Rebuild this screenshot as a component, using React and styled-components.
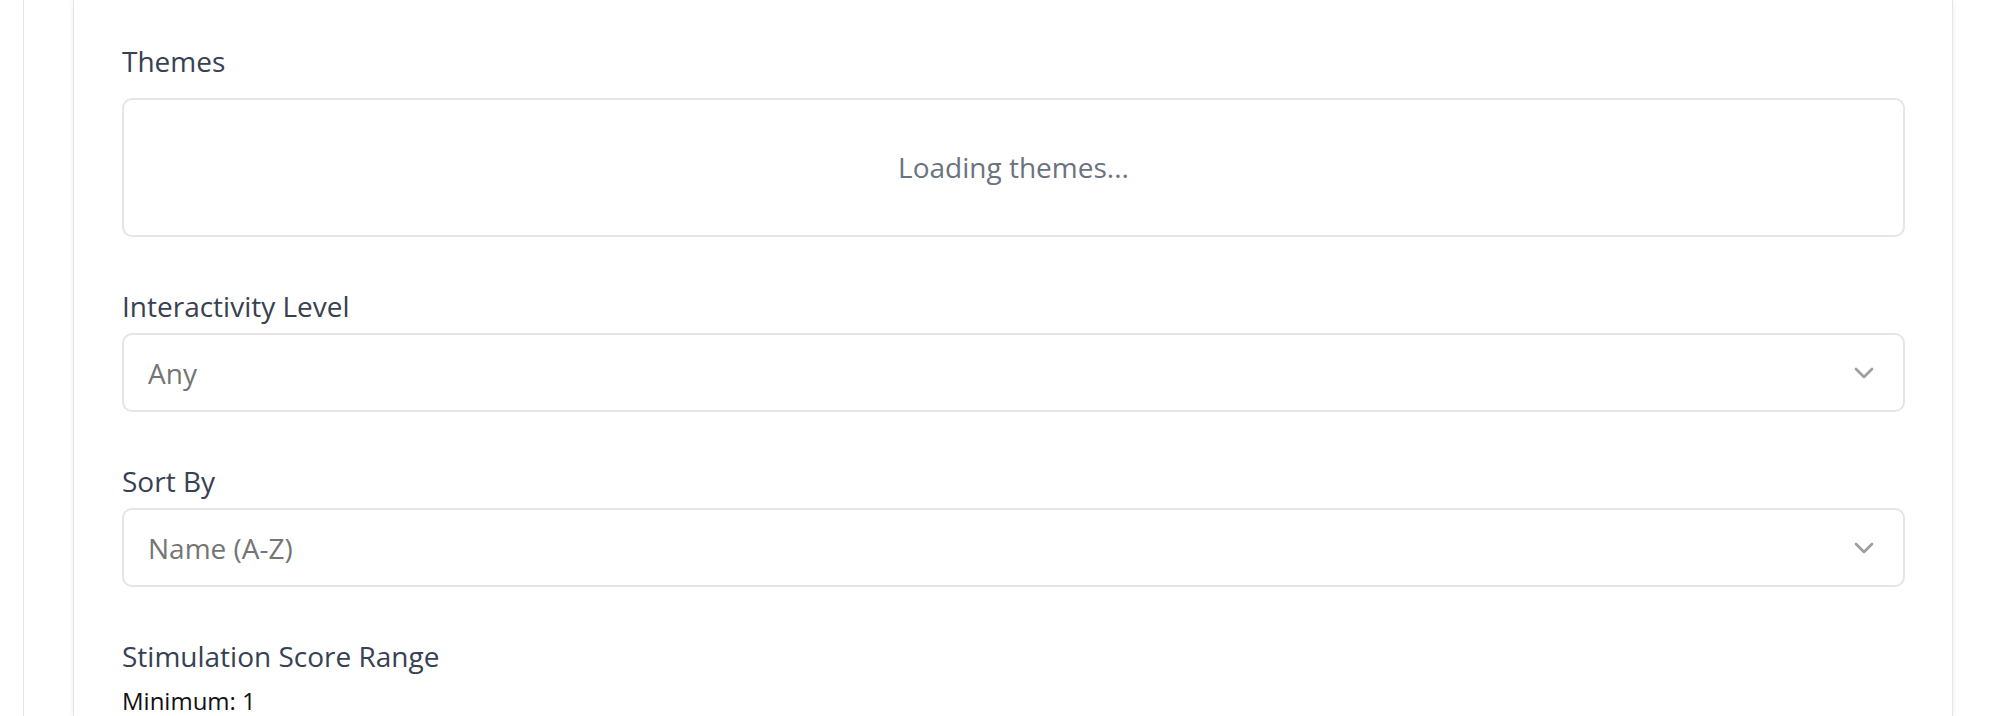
import React from "react";
import styled, { createGlobalStyle } from "styled-components";

const Global = createGlobalStyle`
  html, body {
    margin: 0;
    padding: 0;
    background: #ffffff;
    overflow: hidden;
  }
  body {
    font-family: "Open Sans", "Noto Sans", Arial, sans-serif;
    -webkit-font-smoothing: antialiased;
  }
`;

const Page = styled.div`
  height: 716px;
  padding-left: 23px;
  box-sizing: border-box;
  overflow: hidden;
`;

const Frame = styled.div`
  height: 100%;
  border-left: 1px solid #e4e4e4;
  padding-left: 49px;
  box-sizing: border-box;
`;

const Card = styled.div`
  width: 1880px;
  height: 100%;
  box-sizing: border-box;
  background: #ffffff;
  border-left: 1px solid #e6e6e6;
  border-right: 1px solid #e6e6e6;
  box-shadow: 0 1px 5px rgba(0, 0, 0, 0.08);
  padding: 42px 47px 0 48px;
`;

const Group = styled.div`
  display: flex;
  flex-direction: column;
  margin-bottom: 50px;
`;

const Label = styled.div`
  font-size: 28px;
  line-height: 38px;
  color: #374151;
  margin-bottom: ${(p) => p.$gap ?? 8}px;
`;

const EmptyBox = styled.div`
  height: 139px;
  box-sizing: border-box;
  border: 2px solid #e5e5e5;
  border-radius: 10px;
  display: flex;
  align-items: center;
  justify-content: center;
  padding-bottom: 2px;
  font-size: 28px;
  color: #6b7280;
`;

const SelectBox = styled.div`
  height: 79px;
  box-sizing: border-box;
  border: 2px solid #e5e5e5;
  border-radius: 10px;
  display: flex;
  align-items: center;
  justify-content: space-between;
  padding: 0 29px 0 24px;
  font-size: 28px;
  color: #757575;
  background: #ffffff;
`;

const Chevron = styled.svg`
  width: 20px;
  height: 12px;
  flex: none;
`;

const Sub = styled.div`
  margin-top: 9px;
  font-size: 24px;
  line-height: 33px;
  color: #111111;
`;

const Select = ({ value }) => (
  <SelectBox>
    <span>{value}</span>
    <Chevron viewBox="0 0 20 12">
      <polyline
        points="2,2 10,10 18,2"
        fill="none"
        stroke="#9e9e9e"
        strokeWidth="2.6"
        strokeLinecap="round"
        strokeLinejoin="round"
      />
    </Chevron>
  </SelectBox>
);

export default function App() {
  return (
    <>
      <Global />
      <Page>
        <Frame>
          <Card>
            <Group>
              <Label $gap={18}>Themes</Label>
              <EmptyBox>Loading themes...</EmptyBox>
            </Group>
            <Group>
              <Label>Interactivity Level</Label>
              <Select value="Any" />
            </Group>
            <Group>
              <Label>Sort By</Label>
              <Select value="Name (A-Z)" />
            </Group>
            <div>
              <Label $gap={0}>Stimulation Score Range</Label>
              <Sub>Minimum: 1</Sub>
            </div>
          </Card>
        </Frame>
      </Page>
    </>
  );
}
